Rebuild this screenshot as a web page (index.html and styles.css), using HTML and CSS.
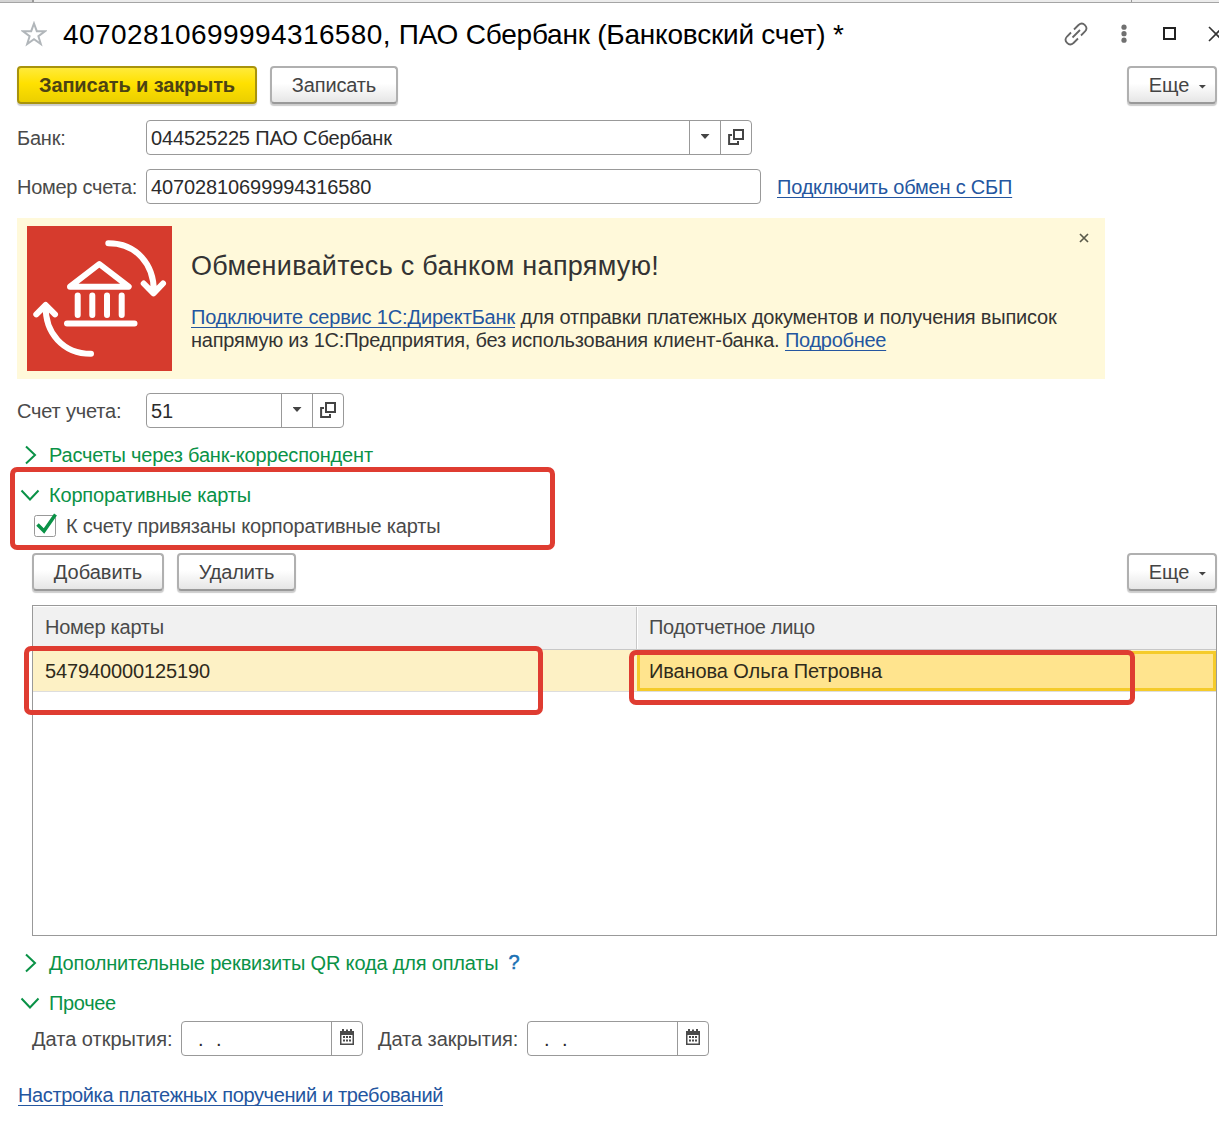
FILE: index.html
```html
<!DOCTYPE html>
<html lang="ru">
<head>
<meta charset="utf-8">
<title>Банковский счет</title>
<link rel="stylesheet" href="styles.css">
</head>
<body>
<svg class="defs" width="0" height="0">
  <symbol id="open" viewBox="0 0 16 16"><path d="M6 1h9v9H6zM4 6H1.100v8.900H10V12" fill="none" stroke="#444" stroke-width="2"/></symbol>
  <symbol id="calendar" viewBox="0 0 14 16"><path fill="#4a4a4a" fill-rule="evenodd" d="M0 2h2V0h2v2h2V0.500h2V2h2V0h2v2h2v14H0zM1.500 6v8.500h11V6z"/><path fill="#4a4a4a" d="M3 7h2v2H3zM6 7h2v2H6zM9 7h2v2H9zM3 10.500h2v2H3zM6 10.500h2v2H6zM9 10.500h2v2H9z"/></symbol>
  <symbol id="right" viewBox="0 0 20 20"><path d="M6 1.500l9 8.500-9 8.500" fill="none" stroke="#0a9247" stroke-width="2"/></symbol>
  <symbol id="down" viewBox="0 0 20 20"><path d="M1.500 5.500l8.500 9 8.500-9" fill="none" stroke="#0a9247" stroke-width="2"/></symbol>
</svg>
<div class="window">
  <div class="strip"><i></i><i></i></div>
  <header class="titlebar">
    <svg class="star" width="26" height="26" viewBox="0 0 26 26"><path d="M13 2.500l2.800 7.700h8.200l-6.600 5 2.400 7.800L13 18.300 6.200 23l2.400-7.800L2 10.200h8.200z" fill="none" stroke="#b1b6ba" stroke-width="2"/></svg>
    <h1><span class="t title-number">40702810699994316580,</span> <span class="t title-bank">ПАО Сбербанк (Банковский счет) *</span></h1>
    <div class="tools">
      <svg class="link-icon" width="26" height="26" viewBox="0 0 26 26" fill="none" stroke="#666" stroke-width="1.800"><path d="M9.500 16.500l7.500-7.500M11 8.500l4.500-4.500c4.500-4 10.500 2 6.500 6.500l-4 4M15 17.500l-4.500 4.500c-4.500 4-10.500-2-6.500-6.500l4-4"/></svg>
      <svg class="dots" width="8" height="20" viewBox="0 0 8 20" fill="#707070"><circle cx="4" cy="3.200" r="2.600"/><circle cx="4" cy="9.700" r="2.600"/><circle cx="4" cy="16.200" r="2.600"/></svg>
      <i class="maximize"></i>
      <svg class="close" width="11" height="16" viewBox="0 0 11 16"><path d="M1 1l14 14M15 1L1 15" stroke="#333" stroke-width="1.600"/></svg>
    </div>
  </header>

  <div class="toolbar">
    <button class="btn primary"><span class="t save-close">Записать и закрыть</span></button>
    <button class="btn save"><span class="t save-t">Записать</span></button>
    <button class="btn more"><span class="t">Еще</span><i class="caret"></i></button>
  </div>

  <div class="row bank">
    <label><span class="t l-bank">Банк:</span></label>
    <div class="field w-bank"><div class="value"><span class="t v-bank">044525225 ПАО Сбербанк</span></div><div class="cell"><i class="caret"></i></div><div class="cell"><svg width="16" height="16"><use href="#open"/></svg></div></div>
  </div>
  <div class="row account">
    <label><span class="t l-number">Номер счета:</span></label>
    <div class="field w-number"><div class="value"><span class="t v-number">40702810699994316580</span></div></div>
    <a class="sbp"><span class="t sbp-t">Подключить обмен с СБП</span></a>
  </div>

  <section class="banner">
    <svg class="logo" width="145" height="145" viewBox="0 0 145 145">
      <rect width="145" height="145" fill="#d63b2d"/>
      <g fill="none" stroke="#fff" stroke-width="6" stroke-linecap="round" stroke-linejoin="round">
        <path d="M81.300 17.200c28 0 46 21 45.500 49M116.700 57.500l9.800 9.800 9.500-9.800"/>
        <path d="M64 127.800c-28 0-46-21-45.300-48M9.300 88.300l9.400-9.300 9.300 9.300"/>
        <path d="M43 60.700L72.300 38l29.400 22.700zM40 97.400h67.500M50.700 69.500v19.500M65.300 69.500v19.500M80 69.500v19.500M94.700 69.500v19.500"/>
      </g>
    </svg>
    <div class="banner-text">
      <h2><span class="t b-title">Обменивайтесь с банком напрямую!</span></h2>
      <p><a><span class="t b-link">Подключите сервис 1С:ДиректБанк</span></a> <span class="t b-one">для отправки платежных документов и получения выписок</span></p>
      <p><span class="t b-two">напрямую из 1С:Предприятия, без использования клиент-банка.</span> <a><span class="t b-more">Подробнее</span></a></p>
    </div>
    <svg class="dismiss" width="10" height="10" viewBox="0 0 10 10"><path d="M1 1l8 8M9 1L1 9" stroke="#5a5a4a" stroke-width="1.700"/></svg>
  </section>

  <div class="row ledger">
    <label><span class="t l-ledger">Счет учета:</span></label>
    <div class="field w-ledger"><div class="value"><span class="t">51</span></div><div class="cell"><i class="caret"></i></div><div class="cell"><svg width="16" height="16"><use href="#open"/></svg></div></div>
  </div>

  <div class="group g-corr"><svg width="20" height="20"><use href="#right"/></svg><span class="t">Расчеты через банк-корреспондент</span></div>
  <div class="group g-cards"><svg width="20" height="20"><use href="#down"/></svg><span class="t">Корпоративные карты</span></div>
  <div class="check"><svg width="24" height="25" viewBox="0 0 24 25"><rect x=".5" y="2.500" width="21" height="21" rx="2" fill="#fff" stroke="#999"/><path d="M3.500 11.500l6.500 6.500L21.500 1.500" fill="none" stroke="#0a9247" stroke-width="3.500"/></svg><span class="t">К счету привязаны корпоративные карты</span></div>

  <div class="toolbar cards-bar">
    <button class="btn add"><span class="t">Добавить</span></button>
    <button class="btn del"><span class="t del-t">Удалить</span></button>
    <button class="btn more"><span class="t">Еще</span><i class="caret"></i></button>
  </div>

  <div class="table">
    <div class="tr head"><div class="td"><span class="t th-card">Номер карты</span></div><div class="td"><span class="t th-person">Подотчетное лицо</span></div></div>
    <div class="tr body"><div class="td"><span class="t td-card">547940000125190</span></div><div class="td active"><span class="t td-person">Иванова Ольга Петровна</span></div></div>
  </div>

  <div class="group g-qr"><svg width="20" height="20"><use href="#right"/></svg><span class="t">Дополнительные реквизиты QR кода для оплаты</span><b class="help">?</b></div>
  <div class="group g-other"><svg width="20" height="20"><use href="#down"/></svg><span class="t">Прочее</span></div>
  <div class="dates">
    <label><span class="t">Дата открытия:</span></label>
    <div class="field w-date"><div class="value date"><span>.</span><span>.</span></div><div class="cell"><svg width="14" height="16"><use href="#calendar"/></svg></div></div>
    <label class="close-date"><span class="t l-close">Дата закрытия:</span></label>
    <div class="field w-date"><div class="value date"><span>.</span><span>.</span></div><div class="cell"><svg width="14" height="16"><use href="#calendar"/></svg></div></div>
  </div>
  <a class="settings"><span class="t settings-t">Настройка платежных поручений и требований</span></a>

  <div class="mark mark-group"></div>
  <div class="mark mark-card"></div>
  <div class="mark mark-person"></div>
</div>
</body>
</html>
```
FILE: styles.css
```css
* { box-sizing: border-box; }
body {
  margin: 0;
  background: #fff;
  color: #4a4a4a;
  font: 20px/24px "Liberation Sans", Arial, sans-serif;
}
.defs { position: absolute; }
.window {
  position: relative;
  width: 1219px;
  height: 1125px;
  overflow: hidden;
}
h1, h2, p { margin: 0; font-weight: 400; }
svg { display: block; flex: none; }
.t { white-space: nowrap; }
a {
  color: #2456a0;
  text-decoration: underline;
  text-decoration-thickness: 1px;
  text-underline-offset: 3px;
  text-decoration-skip-ink: none;
}

.title-number { letter-spacing: .42px; }
.title-bank { letter-spacing: -.22px; }
.save-close { letter-spacing: -.12px; }
.save-t { letter-spacing: -.15px; }
.l-bank { letter-spacing: -.2px; }
.v-bank { letter-spacing: -.14px; }
.l-number { letter-spacing: -.27px; }
.v-number { letter-spacing: -.11px; }
.sbp-t { letter-spacing: -.21px; }
.b-title { letter-spacing: .29px; }
.b-link { letter-spacing: -.16px; }
.b-one { letter-spacing: -.21px; }
.b-two { letter-spacing: -.21px; }
.b-more { letter-spacing: -.28px; }
.l-ledger { letter-spacing: -.18px; }
.group .t, .check .t { letter-spacing: -.18px; }
.g-other .t { letter-spacing: -.32px; }
.del-t { letter-spacing: -.15px; }
.th-card { letter-spacing: -.25px; }
.th-person { letter-spacing: -.3px; }
.td-card { letter-spacing: -.12px; }
.td-person { letter-spacing: -.1px; }
.l-close { letter-spacing: -.06px; }
.settings-t { letter-spacing: -.36px; }

.strip { display: flex; justify-content: space-between; height: 3px; background: #ececec; border-bottom: 1px solid #a5a5a5; }
.strip i { width: 34px; height: 2px; background: #d4d4d4; border-right: 2px solid #999; }
.strip i + i { width: 88px; border-right: 0; border-left: 1px solid #999; background: none; }

.titlebar { display: flex; align-items: center; height: 63px; padding-left: 21px; }
.star { margin-bottom: 1px; }
.titlebar h1 { margin-left: 16px; font-size: 28px; line-height: 34px; color: #000; }
.tools { display: flex; align-items: center; margin: 0 0 2px auto; }
.dots { margin-left: 31px; }
.maximize { width: 13px; height: 13px; margin-left: 35px; border: 2px solid #222; }
.close { margin-left: 32px; }

.toolbar { display: flex; height: 38px; padding: 0 2px 0 17px; }
.btn {
  display: flex;
  align-items: center;
  justify-content: center;
  height: 38px;
  padding: 0;
  border: 2px solid #b0b0b0;
  border-bottom-color: #999;
  border-radius: 4px;
  background: linear-gradient(#fff 45%, #e6e6e6);
  box-shadow: 0 2px 1px #ccc;
  color: #444;
  font: inherit;
}
.primary {
  width: 240px;
  border-color: #a8930c;
  background: linear-gradient(#ffea3a, #ffe100 45%, #ebcf00);
  color: #4c4314;
  font-weight: 700;
}
.save { width: 128px; margin-left: 13px; }
.more { width: 90px; margin-left: auto; gap: 9px; padding-left: 11px; }
.caret { width: 9px; height: 5px; background: #444; clip-path: polygon(0 0, 100% 0, 50% 100%); }
.more .caret { width: 8px; height: 4px; margin-top: 3px; }

.row { display: flex; align-items: center; height: 35px; padding-left: 17px; }
.row label { width: 129px; }
.bank { margin-top: 16px; }
.account { margin-top: 14px; }
.field {
  display: flex;
  height: 35px;
  border: 1px solid #999;
  border-radius: 4px;
  background: #fff;
  color: #2b2b2b;
}
.value { display: flex; align-items: center; flex: 1; padding-left: 4px; }
.cell { display: flex; align-items: center; justify-content: center; width: 31px; padding-bottom: 2px; border-left: 1px solid #999; }
.w-bank { width: 606px; }
.w-number { width: 615px; }
.w-ledger { width: 198px; }
.sbp { margin-left: 16px; }

.banner { display: flex; width: 1088px; height: 161px; margin: 14px 0 0 17px; padding: 8px 16px 8px 10px; background: #fff9da; color: #333; }
.banner-text { flex: 1; margin-left: 19px; padding-top: 23px; }
.banner h2 { margin-bottom: 23px; font-size: 27px; line-height: 34px; }
.banner p { white-space: nowrap; line-height: 23px; }
.dismiss { margin-top: 7px; }
.ledger { margin-top: 14px; }

.group { display: flex; align-items: center; height: 24px; padding-left: 20px; color: #0a9247; }
.group span { margin-left: 9px; }
.g-corr { margin-top: 15px; }
.g-cards { margin-top: 16px; }
.check { display: flex; align-items: center; height: 25px; margin-top: 6px; padding-left: 34px; }
.check span { margin-left: 8px; }

.cards-bar { margin-top: 15px; padding-left: 32px; }
.add { width: 132px; }
.del { width: 119px; margin-left: 13px; }

.table { height: 331px; margin: 14px 2px 0 32px; border: 1px solid #999; }
.tr { display: grid; grid-template-columns: 604px 1fr; }
.td { display: flex; align-items: center; padding-left: 12px; }
.head { height: 44px; border-top: 1px solid #fff; border-bottom: 1px solid #c8c8c8; background: #f1f1f1; }
.head .td { padding-bottom: 2px; }
.head .td + .td { border-left: 1px solid #fff; box-shadow: -1px 0 #c8c8c8; padding-left: 11px; }
.body { height: 42px; padding-top: 1px; border-bottom: 1px solid #ddd; background: #fdf1c5; color: #2f2b1c; }
.body .active { padding-left: 9px; border: 3px solid #f5cb2a; background: #ffe48e; }

.g-qr { margin-top: 271px; margin-top: 15px; }
.g-other { margin-top: 16px; }
.help { margin: -3px 0 0 10px; color: #1b70b4; font-weight: 400; -webkit-text-stroke: .5px #1b70b4; }
.dates { display: flex; align-items: center; height: 35px; margin-top: 6px; padding-left: 32px; }
.dates label { width: 149px; }
.dates .close-date { margin-left: 15px; }
.dates .cell { padding-bottom: 3px; }
.w-date { width: 182px; }
.date { gap: 12.500px; padding-left: 16px; }
.settings { display: block; margin: 27px 0 0 18px; }

.mark { position: absolute; border: 5px solid #df3c31; border-radius: 7px; }
.mark-group { left: 10px; top: 467px; width: 545px; height: 83px; }
.mark-card { left: 24px; top: 646px; width: 519px; height: 69px; }
.mark-person { left: 629px; top: 650px; width: 506px; height: 55px; }
```
